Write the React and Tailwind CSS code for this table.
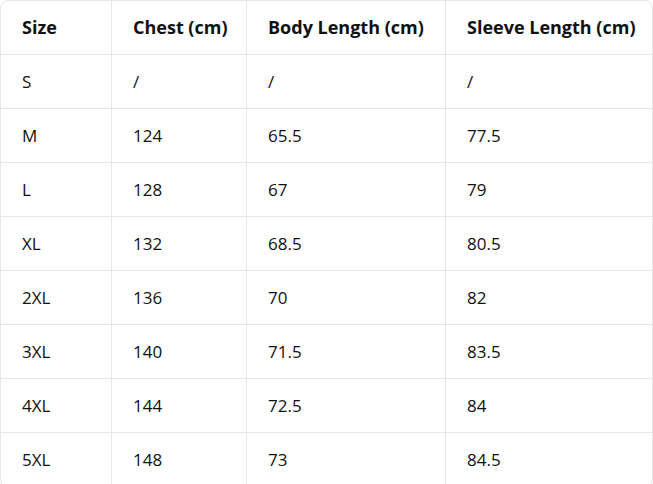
const header = ["Size", "Chest (cm)", "Body Length (cm)", "Sleeve Length (cm)"];
const rows = [
  ["S", "/", "/", "/"],
  ["M", "124", "65.5", "77.5"],
  ["L", "128", "67", "79"],
  ["XL", "132", "68.5", "80.5"],
  ["2XL", "136", "70", "82"],
  ["3XL", "140", "71.5", "83.5"],
  ["4XL", "144", "72.5", "84"],
  ["5XL", "148", "73", "84.5"],
];

function Row({ cells, bold, last }) {
  return (
    <div className={`grid grid-cols-[111px_135px_199px_206px] h-[54px] ${last ? "" : "border-b border-[#e6e6e6]"}`}>
      {cells.map((c, i) => (
        <div
          key={i}
          className={`flex items-center pl-[21px] text-[#111] ${bold ? "font-bold text-[18px]" : "text-[17px]"} ${i < 3 ? "border-r border-[#e6e6e6]" : ""}`}
        >
          {c}
        </div>
      ))}
    </div>
  );
}

export default function App() {
  return (
    <div className="w-[653px] h-[484px] bg-white overflow-hidden" style={{ fontFamily: '"Open Sans", "Noto Sans", sans-serif' }}>
      <div className="w-[653px] border border-[#e6e6e6] rounded-lg overflow-hidden">
        <Row cells={header} bold />
        {rows.map((r, i) => (
          <Row key={i} cells={r} last={i === rows.length - 1} />
        ))}
      </div>
    </div>
  );
}
